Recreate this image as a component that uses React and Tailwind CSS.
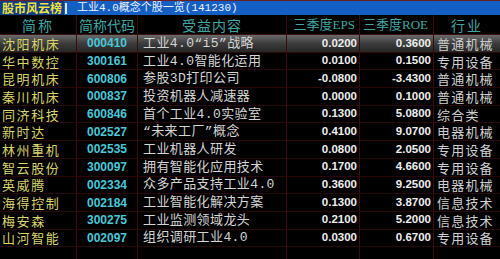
import React from "react";

const rows = [
  ["沈阳机床", "000410", "工业4.0“i5”战略", "0.0200", "0.3600", "普通机械"],
  ["华中数控", "300161", "工业4.0智能化运用", "0.0100", "0.1500", "专用设备"],
  ["昆明机床", "600806", "参股3D打印公司", "-0.0800", "-3.4300", "普通机械"],
  ["秦川机床", "000837", "投资机器人减速器", "0.0000", "0.1000", "普通机械"],
  ["同济科技", "600846", "首个工业4.0实验室", "0.1300", "5.0800", "综合类"],
  ["新时达", "002527", "“未来工厂”概念", "0.4100", "9.0700", "电器机械"],
  ["林州重机", "002535", "工业机器人研发", "0.0800", "2.0500", "专用设备"],
  ["智云股份", "300097", "拥有智能化应用技术", "0.1700", "4.6600", "专用设备"],
  ["英威腾", "002334", "众多产品支持工业4.0", "0.3600", "9.2500", "电器机械"],
  ["海得控制", "002184", "工业智能化解决方案", "0.1300", "3.8700", "信息技术"],
  ["梅安森", "300275", "工业监测领域龙头", "0.2100", "5.2000", "信息技术"],
  ["山河智能", "002097", "组织调研工业4.0", "0.0300", "0.6700", "专用设备"],
];

const cjk = "font-['Noto_Sans_CJK_SC',sans-serif]";
const serif = "font-['Liberation_Serif','Noto_Sans_CJK_SC',serif]";
const mono = "font-['Liberation_Mono','Noto_Sans_CJK_SC',monospace]";
const arial = "font-['Liberation_Sans',sans-serif]";

const cols = "grid grid-cols-[77px_61px_149px_73px_74px_66px]";
const line = "border-r border-[#3a0c0c]";

export default function App() {
  return (
    <div className="w-[500px] h-[259px] bg-black overflow-hidden flex flex-col">
      {/* title bar */}
      <div className="h-[15px] bg-[#145fc4] border-t border-[#6b1f1f] flex items-center leading-none">
        <div className={`${cjk} h-full px-[2px] bg-[#0c3d8c] text-[#f2e23a] text-[12px] font-bold flex items-center`}>
          股市风云榜
        </div>
        <div className="w-[2px] h-[11px] bg-[#e8e8e8] ml-[1px]" />
        <div className={`${mono} text-[#eef2ff] ml-[10px] text-[11px]`}>
          工业4.0概念个股一览(141230)
        </div>
      </div>

      {/* header */}
      <div className={`${cols} h-[20px] items-center text-[14px] leading-none text-[#3fa7a4] ${cjk} border-b border-[#3a1010]`}>
        <div className={`${line} h-full flex items-center justify-center tracking-[2px]`}>简称</div>
        <div className={`${line} h-full flex items-center justify-center`}>简称代码</div>
        <div className={`${line} h-full flex items-center justify-center tracking-[1px]`}>受益内容</div>
        <div className={`${serif} text-[13px] ${line} h-full flex items-center justify-end pr-[4px]`}>三季度EPS</div>
        <div className={`${serif} text-[13px] ${line} h-full flex items-center justify-end pr-[5px]`}>三季度ROE</div>
        <div className="h-full flex items-center justify-center tracking-[2px]">行业</div>
      </div>

      {/* rows */}
      {rows.map((r, i) => (
        <div
          key={r[1]}
          className={`${cols} h-[17.7px] items-center leading-none border-b border-[#2a0808] ${
            i === 0 ? "bg-gradient-to-b from-[#6a6a6a] via-[#3c3c3c] to-[#262626]" : ""
          }`}
        >
          <div className={`${cjk} text-[13px] tracking-[1.6px] text-[#d9d46a] pl-[2px] h-full flex items-center ${line} whitespace-nowrap`}>
            {r[0]}
          </div>
          <div className={`${arial} font-bold text-[12px] text-[#48c8d8] h-full flex items-center justify-center ${line}`}>
            {r[1]}
          </div>
          <div className={`${mono} text-[13px] tracking-[0.4px] text-[#d4d4d4] pl-[5px] h-full flex items-center ${line} whitespace-nowrap`}>
            {r[2]}
          </div>
          <div className={`${arial} font-bold text-[11.5px] text-[#eeeeee] h-full flex items-center justify-end pr-[2px] ${line}`}>
            {r[3]}
          </div>
          <div className={`${arial} font-bold text-[11.5px] text-[#eeeeee] h-full flex items-center justify-end pr-[2px] ${line}`}>
            {r[4]}
          </div>
          <div className={`${cjk} text-[13px] tracking-[1.2px] text-[#cfcfcf] pl-[3px] h-full flex items-center whitespace-nowrap`}>
            {r[5]}
          </div>
        </div>
      ))}

      {/* empty bottom */}
      <div className={`${cols} flex-1`}>
        <div className={line} />
        <div className={line} />
        <div className={line} />
        <div className={line} />
        <div className={line} />
        <div />
      </div>
    </div>
  );
}
